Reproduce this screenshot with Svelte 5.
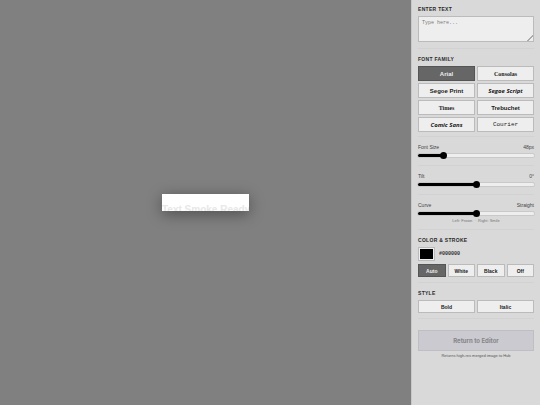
<script lang="ts">
  let text = "";
  let font = "Arial";
  let size = 48;
  let tilt = 0;
  let curve = 0;
  let color = "#000000";
  let stroke = "Auto";
  let bold = false;
  let italic = false;

  const fonts = [
    { name: "Arial", css: "arial" },
    { name: "Consolas", css: "serif" },
    { name: "Segoe Print", css: "arial" },
    { name: "Segoe Script", css: "script" },
    { name: "Times", css: "serif" },
    { name: "Trebuchet", css: "arial" },
    { name: "Comic Sans", css: "script" },
    { name: "Courier", css: "courier" },
  ];
  const strokes = ["Auto", "White", "Black", "Off"];

  $: curveLabel = curve === 0 ? "Straight" : String(curve);
</script>

<div class="app">
  <main>
    <div class="preview"><span>{text || "Text Smoke Ready"}</span></div>
  </main>

  <aside>
    <section>
      <h2><label for="text">Enter Text</label></h2>
      <textarea id="text" bind:value={text} placeholder="Type here..."></textarea>
    </section>

    <section class="fonts">
      <h2>Font Family</h2>
      <div class="grid two">
        {#each fonts as item}
          <button
            class="tall {item.css}"
            class:active={font === item.name}
            on:click={() => (font = item.name)}>{item.name}</button
          >
        {/each}
      </div>
    </section>

    <section>
      <div class="row">
        <label for="size">Font Size</label><span>{size}px</span>
      </div>
      <input
        id="size"
        type="range"
        min="10"
        max="200"
        bind:value={size}
        style="--fill: {((size - 10) / 190) * 100}%"
      />
    </section>

    <section>
      <div class="row">
        <label for="tilt">Tilt</label><span>{tilt}°</span>
      </div>
      <input
        id="tilt"
        type="range"
        min="-45"
        max="45"
        bind:value={tilt}
        style="--fill: {((tilt + 45) / 90) * 100}%"
      />
    </section>

    <section>
      <div class="row">
        <label for="curve">Curve</label><span>{curveLabel}</span>
      </div>
      <input
        id="curve"
        type="range"
        min="-100"
        max="100"
        bind:value={curve}
        style="--fill: {(curve + 100) / 2}%"
      />
      <p class="hint">Left: Frown &nbsp;·&nbsp; Right: Smile</p>
    </section>

    <section>
      <h2>Color &amp; Stroke</h2>
      <div class="color">
        <input id="color" type="color" bind:value={color} />
        <label for="color">{color}</label>
      </div>
      <div class="grid four">
        {#each strokes as item}
          <button class:active={stroke === item} on:click={() => (stroke = item)}
            >{item}</button
          >
        {/each}
      </div>
    </section>

    <section>
      <h2>Style</h2>
      <div class="grid two">
        <button class:active={bold} on:click={() => (bold = !bold)}>Bold</button>
        <button class:active={italic} on:click={() => (italic = !italic)}
          >Italic</button
        >
      </div>
    </section>

    <button class="return" disabled>Return to Editor</button>
    <p class="note">Returns high-res merged image to Hub</p>
  </aside>
</div>

<style>
  :global(body) {
    margin: 0;
    font-family: "Liberation Sans", Arial, sans-serif;
    color: #333;
  }
  .app {
    display: flex;
    min-height: 100vh;
  }
  main {
    flex: 1;
    display: flex;
    align-items: center;
    justify-content: center;
    background: #808080;
  }
  .preview {
    width: 87px;
    height: 17px;
    box-sizing: border-box;
    padding-top: 10px;
    overflow: hidden;
    background: #fff;
    box-shadow: 0 3px 15px rgba(0, 0, 0, 0.4);
    color: #e8e8e8;
    font-size: 10px;
    font-weight: bold;
    line-height: 12px;
    text-align: center;
    white-space: nowrap;
  }
  aside {
    width: 116px;
    padding: 5px 6px;
    background: #d9d9d9;
    border-left: 1px solid #c8c8c8;
  }
  section {
    padding-bottom: 5px;
    margin-bottom: 6px;
    border-bottom: 1px solid #d2d2d2;
  }
  .fonts {
    padding-bottom: 4px;
  }
  h2 {
    margin: 0 0 3px;
    font-size: 5px;
    line-height: 8px;
    text-transform: uppercase;
    letter-spacing: 0.3px;
    color: #2a2a2a;
  }
  textarea {
    display: block;
    box-sizing: border-box;
    width: 100%;
    height: 26px;
    margin-bottom: 1px;
    padding: 3px;
    border: 1px solid #bbb;
    border-radius: 0;
    background: #eee;
    font-family: "Liberation Mono", monospace;
    font-size: 5px;
    line-height: 7px;
  }
  textarea::placeholder {
    color: #777;
  }
  textarea::-webkit-resizer {
    background: linear-gradient(135deg, transparent 80%, #aaa 80%, #aaa 85%, transparent 85%);
  }
  .grid {
    display: grid;
    gap: 2px;
  }
  .two {
    grid-template-columns: 1fr 1fr;
  }
  .four {
    grid-template-columns: repeat(4, 1fr);
  }
  button {
    height: 13px;
    padding: 0;
    border: 1px solid #bbb;
    background: #eee;
    color: #1a1a1a;
    font-family: inherit;
    font-size: 5px;
    font-weight: bold;
  }
  button.active {
    background: #666;
    border-color: #555;
    color: #eee;
  }
  .tall {
    height: 15px;
    font-size: 6px;
  }
  .serif {
    font-family: "Liberation Serif", serif;
  }
  .script {
    font-family: "Comic Sans MS", "Open Sans", cursive;
    font-style: italic;
  }
  .courier {
    font-family: "Liberation Mono", monospace;
    font-weight: normal;
  }
  .row {
    display: flex;
    justify-content: space-between;
    font-size: 5px;
    line-height: 8px;
    color: #444;
  }
  input[type="range"] {
    display: block;
    appearance: none;
    width: 100%;
    height: 9px;
    margin: 0;
    background: transparent;
  }
  input[type="range"]::-webkit-slider-runnable-track {
    height: 3px;
    border-radius: 2px;
    background: linear-gradient(to right, #000 var(--fill), #eee var(--fill));
    box-shadow: 0 0 0 1px rgba(0, 0, 0, 0.07);
  }
  input[type="range"]::-webkit-slider-thumb {
    appearance: none;
    width: 7px;
    height: 7px;
    margin-top: -2px;
    border-radius: 50%;
    background: #000;
  }
  .hint {
    margin: 0;
    font-size: 4px;
    line-height: 6px;
    text-align: center;
    color: #777;
  }
  .color {
    display: flex;
    align-items: center;
    gap: 4px;
    margin-bottom: 3px;
    font-size: 5px;
    font-weight: bold;
    font-family: "Liberation Mono", monospace;
  }
  input[type="color"] {
    box-sizing: border-box;
    width: 17px;
    height: 14px;
    padding: 1px;
    border: 1px solid #bbb;
    background: #eee;
  }
  input[type="color"]::-webkit-color-swatch-wrapper {
    padding: 0;
  }
  input[type="color"]::-webkit-color-swatch {
    border: 0;
  }
  .return {
    display: block;
    width: 100%;
    height: 21px;
    margin-top: 11px;
    border-color: #bfbfc3;
    background: #cbcad0;
    color: #858588;
    font-family: Inter, sans-serif;
    font-size: 6px;
  }
  .note {
    margin: 2px 0 0;
    font-size: 4px;
    line-height: 6px;
    text-align: center;
    color: #555;
  }
</style>
